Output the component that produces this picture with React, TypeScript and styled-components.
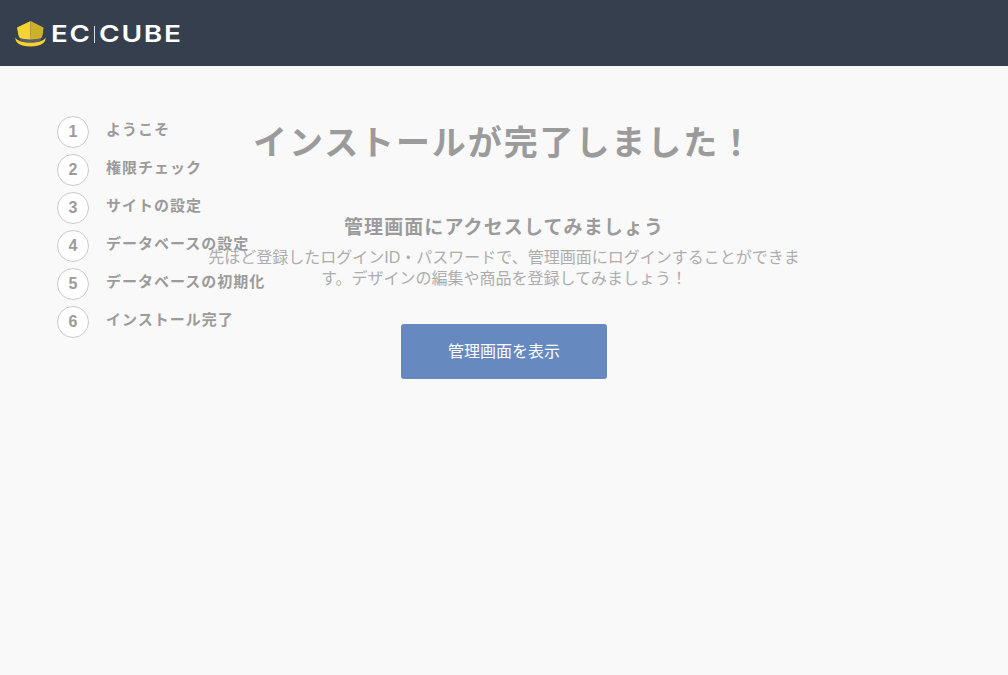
import React from 'react';
import styled, { createGlobalStyle } from 'styled-components';

const FONT = '"Liberation Sans", "Noto Sans CJK JP", sans-serif';

const steps = [
  'ようこそ',
  '権限チェック',
  'サイトの設定',
  'データベースの設定',
  'データベースの初期化',
  'インストール完了',
];

const GlobalStyle = createGlobalStyle`
  html, body {
    margin: 0;
    padding: 0;
    background: #f9f9f9;
    font-family: ${FONT};
  }
`;

const Page = styled.div`
  min-height: 675px;
  background: #f9f9f9;
  position: relative;
`;

const Header = styled.header`
  height: 66px;
  box-sizing: border-box;
  background: #353f4e;
  display: flex;
  align-items: center;
  padding: 2px 0 0 15px;
`;

const Logo = styled.div`
  display: flex;
  align-items: center;
  gap: 5px;
`;

const Wordmark = styled.div`
  display: flex;
  align-items: center;
  height: 17px;
  color: #fff;
  font-family: Inter, sans-serif;
  font-size: 23px;
  font-weight: 600;
  line-height: 17px;
  letter-spacing: 1.4px;
  white-space: nowrap;
`;

const WordPart = styled.span<{ $width: number; $scale: number }>`
  display: inline-block;
  width: ${p => p.$width}px;
  transform-origin: left center;
  transform: scaleX(${p => p.$scale});
`;

const Divider = styled.span`
  width: 1px;
  height: 17px;
  margin: 0 4px;
  background: #d7dade;
`;

const Steps = styled.ol`
  position: absolute;
  left: 57px;
  top: 116px;
  margin: 0;
  padding: 0;
  list-style: none;
  display: flex;
  flex-direction: column;
  gap: 6px;
`;

const Step = styled.li`
  display: flex;
  align-items: flex-start;
  height: 32px;
`;

const StepNumber = styled.span`
  width: 32px;
  height: 32px;
  box-sizing: border-box;
  flex: none;
  border: 1px solid #c9cccc;
  border-radius: 50%;
  background: #fff;
  color: #9b9b9b;
  font-size: 16px;
  font-weight: 700;
  display: flex;
  align-items: center;
  justify-content: center;
`;

const StepLabel = styled.span`
  margin-left: 17px;
  color: #9b9b9b;
  font-size: 15px;
  font-weight: 700;
  line-height: 28px;
  letter-spacing: 1px;
  white-space: nowrap;
`;

const Main = styled.main`
  width: 600px;
  margin: 0 auto;
  display: flex;
  flex-direction: column;
  align-items: center;
  text-align: center;
`;

const Title = styled.h1`
  margin: 52px 0 0;
  color: #9b9b9b;
  font-size: 34px;
  font-weight: 700;
  line-height: 50px;
  letter-spacing: 1.9px;
  white-space: nowrap;
`;

const Lead = styled.h2`
  margin: 47px 0 0;
  color: #9b9b9b;
  font-size: 19px;
  font-weight: 700;
  line-height: 26px;
  letter-spacing: 1.1px;
  white-space: nowrap;
`;

const Body = styled.p`
  margin: 6px 0 0;
  width: 600px;
  color: #adadad;
  font-size: 16px;
  line-height: 21px;
`;

const Action = styled.a`
  margin-top: 35px;
  width: 206px;
  height: 55px;
  box-sizing: border-box;
  padding-bottom: 3px;
  border-radius: 3px;
  background: #6689bf;
  color: #fff;
  font-size: 16px;
  display: flex;
  align-items: center;
  justify-content: center;
  text-decoration: none;
`;

const LogoMark = () => (
  <svg width="31" height="26" viewBox="0 0 31 26">
    <path d="M0.3 16.5 C0.3 22 5 25.5 15.5 25.5 C26 25.5 30.7 22 30.7 16.5 C28.5 20 24 21.5 15.5 21.5 C7 21.5 2.5 20 0.3 16.5 Z" fill="#f5d432" />
    <path d="M4 14 L27 14 L25.5 20 C21 21.8 10 21.8 5.5 20 Z" fill="#5d5f6b" />
    <path d="M15.5 0 L2 6.5 L3 12 C3.4 14.5 4 16 5 17 C8 18 12 18.4 15.5 18.4 Z" fill="#f5d432" />
    <path d="M15.5 0 L28.5 6.5 L28 12 C27.6 14.5 27 16 26 17 C23 18 19 18.4 15.5 18.4 Z" fill="#cdb02c" />
  </svg>
);

export default function App() {
  return (
    <Page>
      <GlobalStyle />
      <Header>
        <Logo>
          <LogoMark />
          <Wordmark>
            <WordPart $width={39} $scale={1.2}>EC</WordPart>
            <Divider />
            <WordPart $width={83} $scale={1.22}>CUBE</WordPart>
          </Wordmark>
        </Logo>
      </Header>
      <Steps>
        {steps.map((label, i) => (
          <Step key={label}>
            <StepNumber>{i + 1}</StepNumber>
            <StepLabel>{label}</StepLabel>
          </Step>
        ))}
      </Steps>
      <Main>
        <Title>インストールが完了しました！</Title>
        <Lead>管理画面にアクセスしてみましょう</Lead>
        <Body>
          先ほど登録したログインID・パスワードで、管理画面にログインすることができます。デザインの編集や商品を登録してみましょう！
        </Body>
        <Action href="#">管理画面を表示</Action>
      </Main>
    </Page>
  );
}
